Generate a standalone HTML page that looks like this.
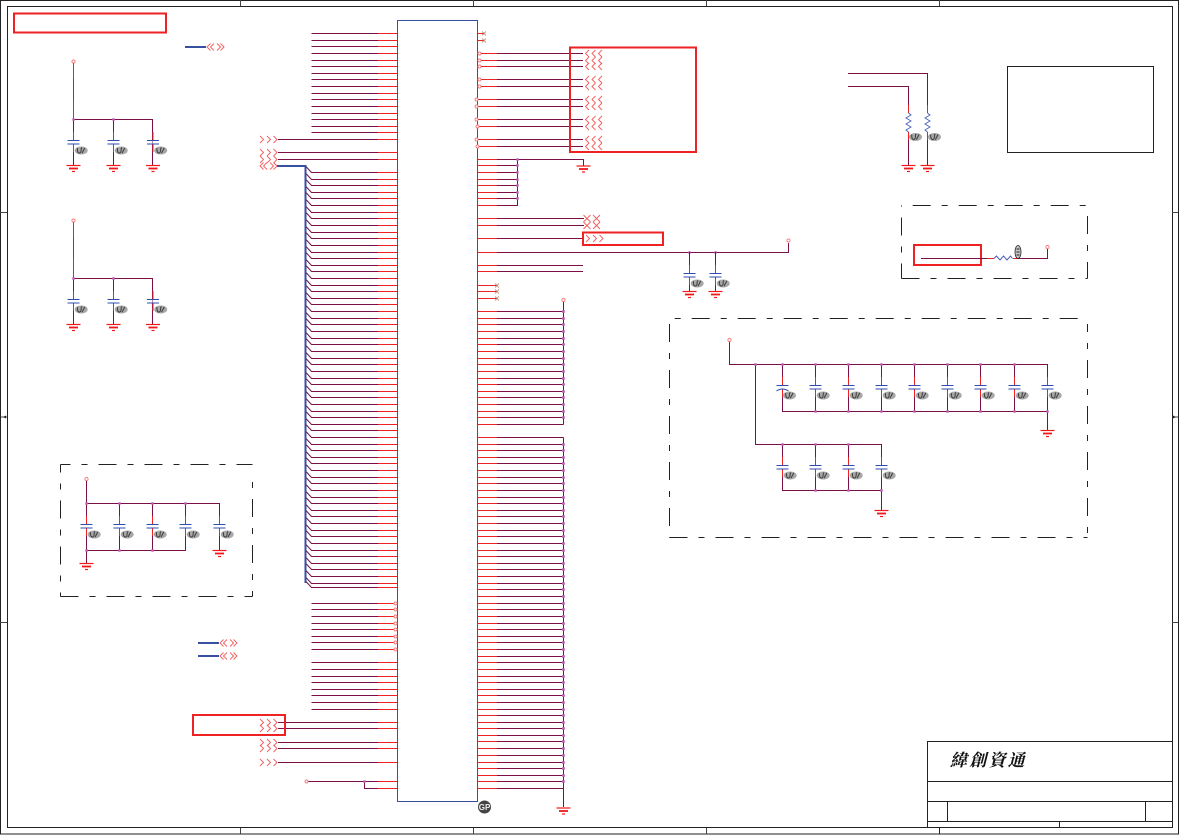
<!DOCTYPE html>
<html><head><meta charset="utf-8"><title>Schematic</title>
<style>html,body{margin:0;padding:0;background:#fff;width:1180px;height:835px;overflow:hidden}svg{display:block}</style>
</head><body>
<svg width="1180" height="835" viewBox="0 0 1180 835" xmlns="http://www.w3.org/2000/svg" fill="none">
<defs>
<path id="w" d="M311.5 33.5H397M311.5 40.5H397M311.5 46.5H397M311.5 53.5H397M311.5 60.5H397M311.5 66.5H397M311.5 73.5H397M311.5 79.5H397M311.5 86.5H397M311.5 93.5H397M311.5 99.5H397M311.5 106.5H397M311.5 113.5H397M311.5 119.5H397M311.5 126.5H397M311.5 132.5H397
M278 139.5H397M278 152.5H397M278 159.5H397
M305.5 166l6 6.5H397M305.5 173l6 6.5H397M305.5 179l6 6.5H397M305.5 186l6 6.5H397M305.5 192l6 6.5H397M305.5 199l6 6.5H397M305.5 206l6 6.5H397M305.5 212l6 6.5H397M305.5 219l6 6.5H397M305.5 226l6 6.5H397M305.5 232l6 6.5H397M305.5 239l6 6.5H397M305.5 246l6 6.5H397M305.5 252l6 6.5H397M305.5 259l6 6.5H397M305.5 265l6 6.5H397M305.5 272l6 6.5H397M305.5 279l6 6.5H397M305.5 285l6 6.5H397M305.5 292l6 6.5H397M305.5 298l6 6.5H397M305.5 305l6 6.5H397M305.5 312l6 6.5H397M305.5 318l6 6.5H397M305.5 325l6 6.5H397M305.5 332l6 6.5H397M305.5 338l6 6.5H397M305.5 345l6 6.5H397M305.5 352l6 6.5H397M305.5 358l6 6.5H397M305.5 365l6 6.5H397M305.5 372l6 6.5H397M305.5 378l6 6.5H397M305.5 385l6 6.5H397M305.5 391l6 6.5H397M305.5 398l6 6.5H397M305.5 405l6 6.5H397M305.5 411l6 6.5H397M305.5 418l6 6.5H397M305.5 424l6 6.5H397M305.5 431l6 6.5H397M305.5 438l6 6.5H397M305.5 444l6 6.5H397M305.5 451l6 6.5H397M305.5 457l6 6.5H397M305.5 464l6 6.5H397M305.5 471l6 6.5H397M305.5 477l6 6.5H397M305.5 484l6 6.5H397M305.5 491l6 6.5H397M305.5 497l6 6.5H397M305.5 504l6 6.5H397M305.5 510l6 6.5H397M305.5 517l6 6.5H397M305.5 524l6 6.5H397M305.5 530l6 6.5H397M305.5 537l6 6.5H397M305.5 544l6 6.5H397M305.5 550l6 6.5H397M305.5 557l6 6.5H397M305.5 563l6 6.5H397M305.5 570l6 6.5H397M305.5 577l6 6.5H397M305.5 581l6 6.5H397
M311.5 603.5H397M311.5 609.5H397M311.5 616.5H397M311.5 623.5H397M311.5 629.5H397M311.5 636.5H397M311.5 642.5H397M311.5 649.5H397M311.5 662.5H397M311.5 669.5H397M311.5 676.5H397M311.5 682.5H397M311.5 689.5H397M311.5 695.5H397M311.5 702.5H397M311.5 709.5H397
M278 722.5H397M278 728.5H397M278 742.5H397M278 748.5H397M278 762.5H397M308 781.5H397M364.5 781.5V788.5H397
M478 53.5H583M478 60.5H583M478 66.5H583M478 79.5H583M478 86.5H583M478 99.5H583M478 106.5H583M478 119.5H583M478 126.5H583M478 139.5H583M478 146.5H583
M478 159.5H583.5V166M478 165.5H517.5M478 172.5H517.5M478 179.5H517.5M478 185.5H517.5M478 192.5H517.5M478 198.5H517.5M478 205.5H517.5V159.5
M478 218.5H584M478 225.5H584M478 238.5H584M478 252.5H788.5V243M478 265.5H583M478 271.5H583
M478 311.5H563.5M478 318.5H563.5M478 324.5H563.5M478 331.5H563.5M478 338.5H563.5M478 344.5H563.5M478 351.5H563.5M478 358.5H563.5M478 364.5H563.5M478 371.5H563.5M478 378.5H563.5M478 384.5H563.5M478 391.5H563.5M478 397.5H563.5M478 404.5H563.5M478 411.5H563.5M478 417.5H563.5M478 424.5H563.5
M478 437.5H563.5M478 444.5H563.5M478 450.5H563.5M478 457.5H563.5M478 463.5H563.5M478 470.5H563.5M478 477.5H563.5M478 483.5H563.5M478 490.5H563.5M478 497.5H563.5M478 503.5H563.5M478 510.5H563.5M478 516.5H563.5M478 523.5H563.5M478 530.5H563.5M478 536.5H563.5M478 543.5H563.5M478 550.5H563.5M478 556.5H563.5M478 563.5H563.5M478 569.5H563.5M478 576.5H563.5M478 583.5H563.5M478 589.5H563.5M478 596.5H563.5M478 603.5H563.5M478 609.5H563.5M478 616.5H563.5M478 623.5H563.5M478 629.5H563.5M478 636.5H563.5M478 642.5H563.5M478 649.5H563.5M478 656.5H563.5M478 662.5H563.5M478 669.5H563.5M478 676.5H563.5M478 682.5H563.5M478 689.5H563.5M478 695.5H563.5M478 702.5H563.5M478 709.5H563.5M478 715.5H563.5M478 722.5H563.5M478 728.5H563.5M478 735.5H563.5M478 741.5H563.5M478 748.5H563.5M478 755.5H563.5M478 762.5H563.5M478 768.5H563.5M478 775.5H563.5M478 781.5H563.5M478 788.5H563.5"/>
<clipPath id="cr"><rect x="378" y="0" width="19.5" height="835"/><rect x="478" y="0" width="19" height="835"/></clipPath>
<clipPath id="cd"><rect x="562" y="306" width="3" height="115"/><rect x="562" y="441" width="3" height="345"/></clipPath>
<g id="bl">
<ellipse cx="0" cy="0" rx="6.5" ry="4" fill="#a8a8a8"/>
<path d="M-3.8-2.4Q-4 2.6-1.8 2.6Q.2 2.4 0-2.4M.8 2.6L3.6-2.6M-.2-2.6H1" stroke="#3c3c3c" stroke-width="1"/>
</g>
<g id="g"><path d="M-7 .5H7" stroke="#f01818" stroke-width="1.2"/><path d="M-4.5 3.5H4.5" stroke="#f01818" stroke-width="1.8"/><path d="M-1.5 6.5H1.5" stroke="#f01818" stroke-width="1.2"/></g>
<g id="c"><path d="M0-8V0M0 4V12" stroke="#ee2222"/><path d="M0 1V3.5" stroke="#fff"/><path d="M-6 .5H6M-6 4H6" stroke="#2f4cb0"/><use href="#bl" x="7.7" y="10.5"/></g>
<g id="c2"><path d="M0-8V0M0 4V12" stroke="#ee2222"/><path d="M0 1V3.5" stroke="#fff"/><path d="M-6 .5H6M-6 6Q0 2 6 6" stroke="#2f4cb0"/><use href="#bl" x="7" y="10.5"/></g>
<g id="r"><path d="M0-8V0M0 19V27" stroke="#ee2222"/><path d="M0 0V19" stroke="#fff" stroke-width="2"/><path d="M0 0l2.5 2-5 3 5 3-5 3 5 3-5 3 2.5 2" stroke="#4a62b0" stroke-width=".9"/><use href="#bl" x="7" y="24"/></g>
<g id="a" stroke="#f45c5c" stroke-width=".9"><path d="M0-3.5L3.5 0L0 3.5M7-3.5L10.5 0L7 3.5M13.5-3.5L17 0L13.5 3.5"/></g>
<g id="b" stroke="#f45c5c" stroke-width=".9"><path d="M3.5-3.5L0 0L3.5 3.5M10-3.5L6.5 0L10 3.5M16.5-3.5L13 0L16.5 3.5"/></g>
<g id="d" stroke="#f45c5c" stroke-width=".9"><path d="M3.5-3.5L0 0L3.5 3.5M7-3.5L3.5 0L7 3.5M10-3.5L13.5 0L10 3.5M13.5-3.5L17 0L13.5 3.5"/></g>
<g id="e" stroke="#f45c5c" stroke-width=".9"><path d="M0-3.5L3.5 0L0 3.5M7-3.5L3.5 0L7 3.5M9.5-3.5L13 0L9.5 3.5M16.5-3.5L13 0L16.5 3.5"/></g>
</defs>

<!-- frame -->
<path d="M.5.5H1178.5V834H.5ZM7.5 6.5H1172.5V827.5H7.5Z" stroke="#222"/>
<path d="M240.5 0V6M473.5 0V6M706.5 0V6M939.5 0V6M240.5 828V834M473.5 828V834M706.5 828V834M939.5 828V834M0 212.5H7M0 622.5H7M1172 212.5H1178M1172 622.5H1178" stroke="#444"/>
<path d="M1 417H7M1172 417H1178" stroke="#444"/>
<path d="M3 417L6 415.5V418.5ZM1176 417L1173 415.5V418.5Z" fill="#222"/>

<!-- main IC -->
<use href="#w" stroke="#7a1045"/>
<path d="M563.5 424.5V302M563.5 437.5V807" stroke="#7a1045"/>
<use href="#w" stroke="#ee2222" clip-path="url(#cr)"/>
<use href="#w" stroke="#c060b8" stroke-width="2.6" stroke-linecap="square" clip-path="url(#cd)"/>
<path d="M397.5 20.5H477.5V801.5H397.5Z" stroke="#3850a0"/>
<path d="M478 33.5H484M478 40.5H484M478 285.5H497M478 291.5H497M478 298.5H497" stroke="#ee2222"/>
<path d="M482 31.5l4 4M486 31.5l-4 4M482 38.5l4 4M486 38.5l-4 4M495 283.5l4 4M499 283.5l-4 4M495 289.5l4 4M499 289.5l-4 4M495 296.5l4 4M499 296.5l-4 4" stroke="#b87a5a" stroke-width=".8"/>
<path d="M517.5 159.5h.01M517.5 165.5h.01M517.5 172.5h.01M517.5 179.5h.01M517.5 185.5h.01M517.5 192.5h.01M517.5 198.5h.01M364.5 781.5h.01M689.5 252.5h.01M715.5 252.5h.01" stroke="#c060b8" stroke-width="2.4" stroke-linecap="square"/>

<!-- bus -->
<path d="M277 166H305.5V583" stroke="#3850a0" stroke-width="2"/>
<path d="M185 47H206M198 643H219M198 656H219" stroke="#3850a0" stroke-width="2"/>
<use href="#d" x="207" y="47"/><use href="#d" x="220" y="643"/><use href="#d" x="220" y="656"/>

<!-- left labels -->
<use href="#a" x="260" y="139.5"/><use href="#a" x="260" y="152.5"/><use href="#a" x="260" y="159.5"/><use href="#d" x="260" y="166"/>
<use href="#a" x="260" y="722.5"/><use href="#a" x="260" y="728.5"/><use href="#a" x="260" y="742.5"/><use href="#a" x="260" y="748.5"/><use href="#a" x="260" y="762.5"/>

<!-- right labels -->
<use href="#b" x="585.5" y="53.5"/><use href="#b" x="585.5" y="60.5"/><use href="#b" x="585.5" y="66.5"/><use href="#b" x="585.5" y="79.5"/><use href="#b" x="585.5" y="86.5"/><use href="#b" x="585.5" y="99.5"/><use href="#b" x="585.5" y="106.5"/><use href="#b" x="585.5" y="119.5"/><use href="#b" x="585.5" y="126.5"/><use href="#b" x="585.5" y="139.5"/><use href="#b" x="585.5" y="146.5"/>
<use href="#e" x="583.5" y="218.5"/><use href="#e" x="583.5" y="225.5"/><use href="#a" x="586" y="238.5"/>

<!-- small pin circles -->
<g stroke="#f27a7a" stroke-width=".9" fill="#fff">
<circle cx="479.5" cy="53.5" r="1.5"/><circle cx="479.5" cy="60.5" r="1.5"/><circle cx="479.5" cy="66.5" r="1.5"/><circle cx="479.5" cy="79.5" r="1.5"/><circle cx="479.5" cy="86.5" r="1.5"/><circle cx="476.5" cy="99.5" r="1.5"/><circle cx="476.5" cy="106.5" r="1.5"/><circle cx="476.5" cy="119.5" r="1.5"/><circle cx="477.5" cy="126.5" r="1.5"/><circle cx="476.5" cy="139.5" r="1.5"/><circle cx="477.5" cy="146.5" r="1.5"/>
<circle cx="395.5" cy="603.5" r="1.5"/><circle cx="395.5" cy="609.5" r="1.5"/><circle cx="395.5" cy="616.5" r="1.5"/><circle cx="395.5" cy="623.5" r="1.5"/><circle cx="395.5" cy="629.5" r="1.5"/><circle cx="395.5" cy="636.5" r="1.5"/><circle cx="395.5" cy="642.5" r="1.5"/><circle cx="395.5" cy="649.5" r="1.5"/>
<circle cx="306.5" cy="781.5" r="1.5"/><circle cx="73.5" cy="61.5" r="1.6"/><circle cx="73.5" cy="220.5" r="1.6"/><circle cx="86.5" cy="479" r="1.6"/><circle cx="563.5" cy="300" r="1.6"/><circle cx="788.5" cy="240.5" r="1.6"/><circle cx="729.5" cy="340" r="1.6"/><circle cx="1047.5" cy="247" r="1.6"/>
</g>

<!-- red highlight boxes -->
<g stroke="#ee2222" stroke-width="2">
<rect x="14" y="13.5" width="152" height="19"/>
<rect x="570" y="47.5" width="126" height="104.5"/>
<rect x="583" y="232.5" width="80" height="12.5"/>
<rect x="914" y="245" width="67" height="20"/>
<rect x="193" y="715" width="92" height="20"/>
</g>

<!-- black box -->
<rect x="1007.5" y="66.5" width="146" height="86" stroke="#222"/>

<!-- dash boxes -->
<g stroke="#222" stroke-dasharray="18 11 6 11">
<path d="M901.5 205.5H1087.5" stroke-dashoffset="34.8"/>
<path d="M901.5 278.5H1087.5"/>
<path d="M901.5 205.5V278.5" stroke-dashoffset="34"/>
<path d="M1087.5 216V278.5"/>
<path d="M669.5 318.5H1087.5" stroke-dashoffset="23.8"/>
<path d="M669.5 537.5H1087.5"/>
<path d="M669.5 324V537.5"/>
<path d="M1087.5 324V537.5" stroke-dashoffset="10"/>
<path d="M60.5 464.5H252.5" stroke-dashoffset="8"/>
<path d="M60.5 596.5H252.5"/>
<path d="M60.5 464.5V596.5" stroke-dashoffset="10"/>
<path d="M252.5 476V596.5" stroke-dashoffset="23"/>
</g>

<!-- group wires -->
<path d="M73.5 63V78M73.5 100V119M73.5 222V237M73.5 259V278" stroke="#ee2222"/>
<path d="M73.5 78V100M73.5 237V259" stroke="#3850a0"/>
<path d="M73.5 119.5H152.5V165M113.5 119.5V165M73.5 119.5V165M73.5 278.5H152.5V324M113.5 278.5V324M73.5 278.5V324M86.5 481V563M86.5 503.5H219.5V551M119.5 503.5V550.5M152.5 503.5V550.5M185.5 503.5V550.5H86.5M729.5 342V364.5H1047.5V431M755.5 364.5V444.5H881.5V510M782.5 364.5V411.5H1047.5M815.5 364.5V411.5M848.5 364.5V411.5M881.5 364.5V411.5M914.5 364.5V411.5M947.5 364.5V411.5M980.5 364.5V411.5M1014.5 364.5V411.5M782.5 444.5V490.5H881.5M815.5 444.5V490.5M848.5 444.5V490.5M689.5 252V291M715.5 252V291M848 73.5H927.5V165M848 86.5H908.5V165M921 258.5H987M1018 258.5H1047.5V249" stroke="#7a1045"/>
<path d="M113.5 119.5h.01M73.5 119.5h.01M113.5 278.5h.01M73.5 278.5h.01M86.5 503.5h.01M119.5 503.5h.01M152.5 503.5h.01M185.5 503.5h.01M86.5 550.5h.01M119.5 550.5h.01M152.5 550.5h.01M755.5 364.5h.01M782.5 364.5h.01M815.5 364.5h.01M848.5 364.5h.01M881.5 364.5h.01M914.5 364.5h.01M947.5 364.5h.01M980.5 364.5h.01M1014.5 364.5h.01M815.5 411.5h.01M848.5 411.5h.01M881.5 411.5h.01M914.5 411.5h.01M947.5 411.5h.01M980.5 411.5h.01M1014.5 411.5h.01M1047.5 411.5h.01M782.5 444.5h.01M815.5 444.5h.01M848.5 444.5h.01M815.5 490.5h.01M848.5 490.5h.01M881.5 490.5h.01" stroke="#c060b8" stroke-width="2.4" stroke-linecap="square"/>

<!-- caps -->
<use href="#c" x="73.5" y="140"/><use href="#c" x="113.5" y="140"/><use href="#c" x="153" y="140"/>
<use href="#c" x="73.5" y="299"/><use href="#c" x="113.5" y="299"/><use href="#c" x="153" y="299"/>
<use href="#c" x="86.5" y="524"/><use href="#c" x="119.5" y="524"/><use href="#c" x="152.5" y="524"/><use href="#c" x="185.5" y="524"/><use href="#c" x="219.5" y="524"/>
<use href="#c" x="689.5" y="273"/><use href="#c" x="715.5" y="273"/>
<use href="#c2" x="782.5" y="385"/><use href="#c" x="815.5" y="385"/><use href="#c" x="848.5" y="385"/><use href="#c" x="881.5" y="385"/><use href="#c" x="914.5" y="385"/><use href="#c" x="947.5" y="385"/><use href="#c" x="980.5" y="385"/><use href="#c" x="1014.5" y="385"/><use href="#c" x="1047.5" y="385"/>
<use href="#c" x="782.5" y="465"/><use href="#c" x="815.5" y="465"/><use href="#c" x="848.5" y="465"/><use href="#c" x="881.5" y="465"/>

<!-- resistors -->
<use href="#r" x="908.5" y="113"/><use href="#r" x="927.5" y="113"/>
<path d="M987 258.5H994M1013 258.5H1018" stroke="#ee2222"/>
<path d="M994 258.5l2.5-2.5 3.5 4 3.5-4 3.5 4 3.5-4 2 2.5" stroke="#4a62b0"/>
<g transform="translate(1018 252)"><ellipse cx="0" cy="0" rx="3" ry="6.5" fill="#c8c8c8" stroke="#222" stroke-width=".8"/><path d="M-1.5-3H1.5M-1.5 0H1.5M-1.5 3H1.5" stroke="#222"/></g>

<!-- grounds -->
<use href="#g" x="73.5" y="165"/><use href="#g" x="113.5" y="165"/><use href="#g" x="153" y="165"/>
<use href="#g" x="73.5" y="324"/><use href="#g" x="113.5" y="324"/><use href="#g" x="153" y="324"/>
<use href="#g" x="86.5" y="563"/><use href="#g" x="219.5" y="550"/>
<use href="#g" x="583.5" y="165.5"/><use href="#g" x="563.5" y="807.5"/>
<use href="#g" x="689.5" y="291"/><use href="#g" x="715.5" y="291"/>
<use href="#g" x="908.5" y="165"/><use href="#g" x="927.5" y="165"/>
<use href="#g" x="1047.5" y="430"/><use href="#g" x="881.5" y="510"/>

<!-- GP badge -->
<circle cx="484.5" cy="807" r="6.5" fill="#444"/>
<text x="484.5" y="810" text-anchor="middle" font-family="Liberation Sans, sans-serif" font-size="8" font-weight="bold" fill="#eee">GP</text>

<!-- title block -->
<path d="M927.5 827V741.5H1172M927.5 781.5H1172M927.5 801.5H1172M927.5 821.5H1172M947.5 801.5V821.5M1145.5 801.5V821.5M1059.5 821.5V827.5M939.5 828V834" stroke="#222"/>
<text x="950" y="766" font-family="'Liberation Serif','Noto Serif CJK SC','Noto Sans CJK TC',serif" font-style="italic" font-weight="700" font-size="17" letter-spacing="2.2" fill="#111">緯創資通</text>
</svg>
</body></html>
